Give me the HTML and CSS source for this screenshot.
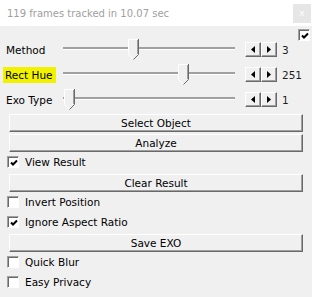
FILE: index.html
```html
<!DOCTYPE html>
<html lang="en">
<head>
  <meta charset="UTF-8" />
  <meta name="viewport" content="width=device-width, initial-scale=1.0" />
  <title>Object Tracker</title>
  <link rel="stylesheet" href="styles.css">
</head>
<body>
  <div class="titlebar">
    <span class="title">119 frames tracked in 10.07 sec</span>
    <span class="close">x</span>
  </div>

  <div class="panel">
    <div class="top-check">
      <span class="cb checked"><svg width="8" height="7" viewBox="0 0 8 7"><path d="M1 3.5L3 5.5L7 1.5" stroke="#000" stroke-width="2" fill="none"/></svg></span>
    </div>

    <div class="param">
      <label class="param-label">Method</label>
      <div class="slider">
        <div class="track"></div>
        <svg class="thumb" style="left:65px" width="11" height="21" viewBox="0 0 11 21"><path d="M0 0H11V15.5L5.5 21L0 15.5Z" fill="#f0f0f0"/><path d="M0.5 15.5V0.5H10" stroke="#fff" fill="none"/><path d="M0.5 15.5L5.5 20.5" stroke="#fff" fill="none"/><path d="M10.5 0V15.5L5.5 20.5" stroke="#696969" fill="none"/><path d="M9.5 1V15" stroke="#a0a0a0" fill="none"/></svg>
      </div>
      <div class="spin">
        <button class="spin-btn"><svg width="4" height="7" viewBox="0 0 4 7"><path d="M4 0V7L0 3.5Z"/></svg></button>
        <button class="spin-btn"><svg width="4" height="7" viewBox="0 0 4 7"><path d="M0 0V7L4 3.5Z"/></svg></button>
      </div>
      <span class="param-value">3</span>
    </div>

    <div class="param">
      <label class="param-label"><span class="highlight">Rect Hue</span></label>
      <div class="slider">
        <div class="track"></div>
        <svg class="thumb" style="left:115px" width="11" height="21" viewBox="0 0 11 21"><path d="M0 0H11V15.5L5.5 21L0 15.5Z" fill="#f0f0f0"/><path d="M0.5 15.5V0.5H10" stroke="#fff" fill="none"/><path d="M0.5 15.5L5.5 20.5" stroke="#fff" fill="none"/><path d="M10.5 0V15.5L5.5 20.5" stroke="#696969" fill="none"/><path d="M9.5 1V15" stroke="#a0a0a0" fill="none"/></svg>
      </div>
      <div class="spin">
        <button class="spin-btn"><svg width="4" height="7" viewBox="0 0 4 7"><path d="M4 0V7L0 3.5Z"/></svg></button>
        <button class="spin-btn"><svg width="4" height="7" viewBox="0 0 4 7"><path d="M0 0V7L4 3.5Z"/></svg></button>
      </div>
      <span class="param-value">251</span>
    </div>

    <div class="param">
      <label class="param-label">Exo Type</label>
      <div class="slider">
        <div class="track"></div>
        <svg class="thumb" style="left:1px" width="11" height="21" viewBox="0 0 11 21"><path d="M0 0H11V15.5L5.5 21L0 15.5Z" fill="#f0f0f0"/><path d="M0.5 15.5V0.5H10" stroke="#fff" fill="none"/><path d="M0.5 15.5L5.5 20.5" stroke="#fff" fill="none"/><path d="M10.5 0V15.5L5.5 20.5" stroke="#696969" fill="none"/><path d="M9.5 1V15" stroke="#a0a0a0" fill="none"/></svg>
      </div>
      <div class="spin">
        <button class="spin-btn"><svg width="4" height="7" viewBox="0 0 4 7"><path d="M4 0V7L0 3.5Z"/></svg></button>
        <button class="spin-btn"><svg width="4" height="7" viewBox="0 0 4 7"><path d="M0 0V7L4 3.5Z"/></svg></button>
      </div>
      <span class="param-value">1</span>
    </div>

    <div class="actions">
      <button class="btn">Select Object</button>
      <button class="btn">Analyze</button>
      <div class="check-row">
        <span class="cb checked"><svg width="8" height="7" viewBox="0 0 8 7"><path d="M1 3.5L3 5.5L7 1.5" stroke="#000" stroke-width="2" fill="none"/></svg></span>
        <span>View Result</span>
      </div>
      <button class="btn">Clear Result</button>
      <div class="check-row">
        <span class="cb"></span>
        <span>Invert Position</span>
      </div>
      <div class="check-row">
        <span class="cb checked"><svg width="8" height="7" viewBox="0 0 8 7"><path d="M1 3.5L3 5.5L7 1.5" stroke="#000" stroke-width="2" fill="none"/></svg></span>
        <span>Ignore Aspect Ratio</span>
      </div>
      <button class="btn">Save EXO</button>
      <div class="check-row">
        <span class="cb"></span>
        <span>Quick Blur</span>
      </div>
      <div class="check-row">
        <span class="cb"></span>
        <span>Easy Privacy</span>
      </div>
    </div>
  </div>
</body>
</html>
```

FILE: styles.css
```css
body {
  margin: 0;
  font-family: "DejaVu Sans", sans-serif;
  font-size: 10.5px;
  color: #000;
  background-color: #f0f0f0;
}
.titlebar {
  height: 26px;
  background-color: #fff;
  display: flex;
  align-items: center;
  justify-content: space-between;
  padding-left: 7px;
}
.title {
  font-size: 10px;
  color: #a0a0a0;
}
.close {
  width: 18px;
  height: 19px;
  margin-right: 1px;
  background-color: #e6e6e6;
  color: #fff;
  font-size: 9px;
  display: flex;
  align-items: center;
  justify-content: center;
}
.top-check {
  height: 11px;
  display: flex;
  justify-content: flex-end;
  padding-right: 2px;
}
.top-check .cb {
  margin-top: 3px;
}
.param {
  height: 25px;
  display: flex;
  align-items: center;
  padding-left: 6px;
}
.param-label {
  width: 57px;
}
.highlight {
  background-color: #f2f200;
  padding: 2px 3px 2px 2px;
  margin-left: -3px;
}
.slider {
  position: relative;
  width: 172px;
  height: 21px;
}
.track {
  margin-top: 8px;
  height: 2px;
  background-color: #a0a0a0;
  border-bottom: 1px solid #fff;
}
.thumb {
  position: absolute;
  top: 0;
  display: block;
}
.spin {
  display: flex;
  margin-left: 10px;
}
.spin-btn {
  width: 16px;
  height: 15px;
  padding: 0;
  display: flex;
  align-items: center;
  justify-content: center;
  background-color: #f0f0f0;
  border: 1px solid;
  border-color: #fff #696969 #696969 #fff;
  box-shadow: inset -1px -1px #a0a0a0;
}
.spin-btn svg {
  display: block;
}
.param-value {
  margin-left: 5px;
  color: #1e1e1e;
}
.actions {
  display: flex;
  flex-direction: column;
  padding-top: 1px;
}
.btn {
  height: 18px;
  margin: 1px 9px;
  padding: 0;
  font-family: inherit;
  font-size: 10.5px;
  color: #000;
  background-color: #f0f0f0;
  border: 1px solid;
  border-color: #fff #696969 #696969 #fff;
  box-shadow: inset -1px -1px #a0a0a0;
}
.check-row {
  height: 20px;
  box-sizing: border-box;
  padding-bottom: 3px;
  display: flex;
  align-items: center;
  padding-left: 7px;
}
.cb {
  width: 12px;
  height: 12px;
  box-sizing: border-box;
  background-color: #fff;
  border: 1px solid;
  border-color: #a0a0a0 #fff #fff #a0a0a0;
  box-shadow: inset 1px 1px #696969;
  display: flex;
  align-items: center;
  justify-content: center;
  margin-right: 6px;
}
.top-check .cb {
  margin-right: 0;
}
.cb svg {
  display: block;
  margin: 1px 0 0 1px;
}
```
